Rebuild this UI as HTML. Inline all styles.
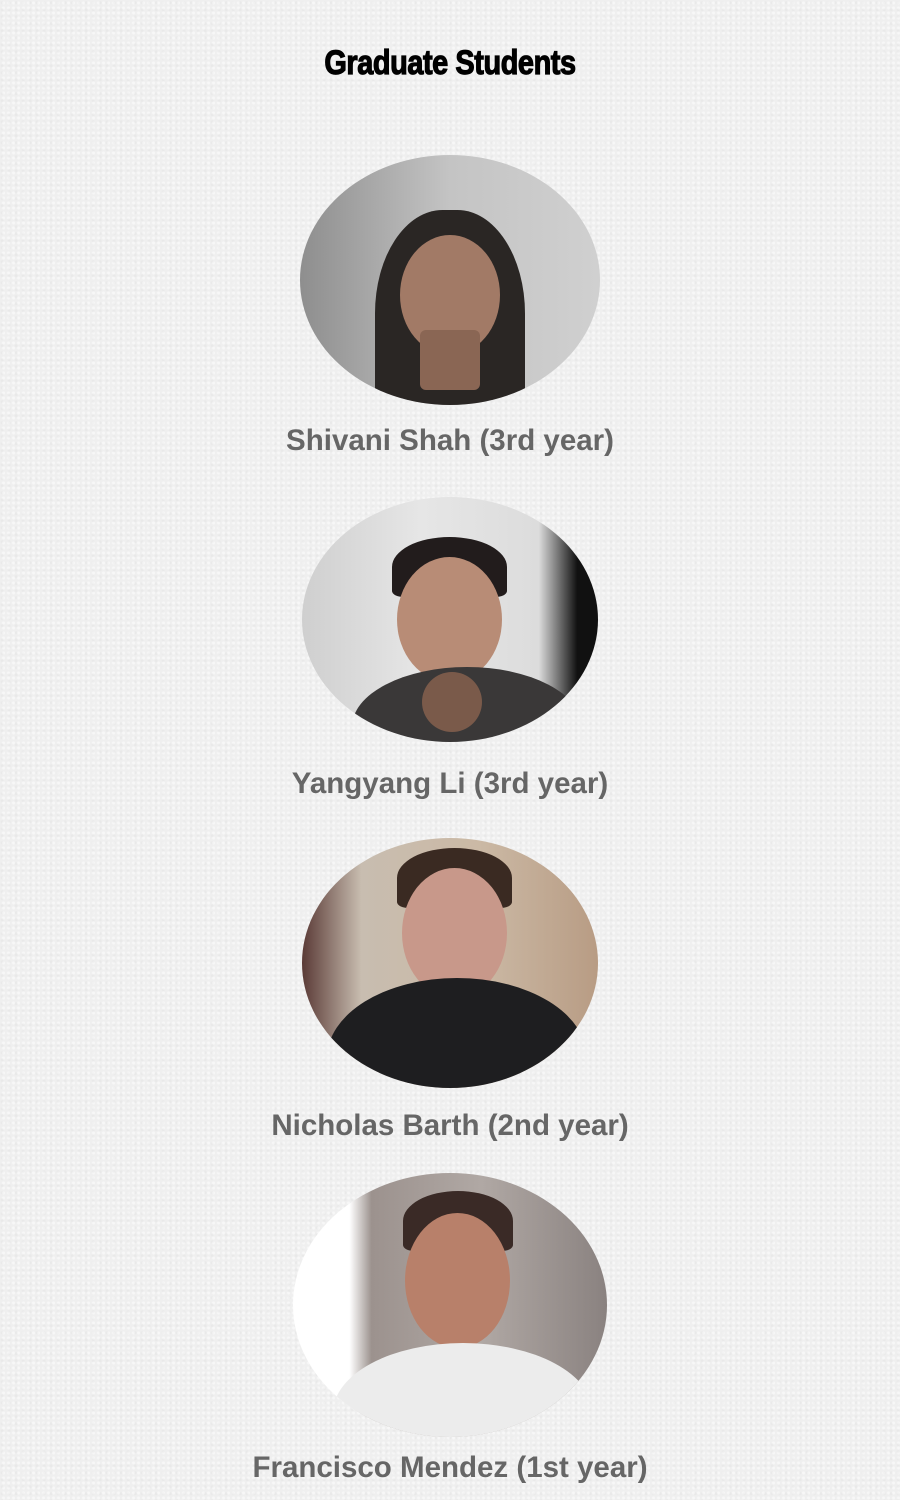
<!DOCTYPE html>
<html><head><meta charset="utf-8"><style>
html,body{margin:0;padding:0}
body{width:900px;height:1500px;position:relative;overflow:hidden;background:#efefef;
background-image:radial-gradient(circle at 30% 40%,rgba(0,0,0,.025) 1px,transparent 2px),radial-gradient(circle at 70% 60%,rgba(255,255,255,.5) 1px,transparent 2px);
background-size:7px 7px,5px 5px;font-family:"Liberation Sans",sans-serif}
h1{position:absolute;left:0;width:900px;top:43px;margin:0;text-align:center;font-size:34px;line-height:40px;font-weight:bold;color:#000;transform:scaleX(.85);-webkit-text-stroke:1.2px #000;letter-spacing:-0.5px}
.ph{position:absolute;border-radius:50%;overflow:hidden}
.nm{position:absolute;left:0;width:900px;text-align:center;font-size:29.5px;font-weight:bold;color:#666;line-height:32px}
.face{position:absolute;border-radius:50%}
</style></head><body>
<h1>Graduate Students</h1>

<div class="ph" style="left:300px;top:155px;width:300px;height:250px;background:linear-gradient(90deg,#8e8e8e,#c4c4c4 50%,#d0d0d0)">
 <div class="face" style="left:75px;top:55px;width:150px;height:230px;background:#2a2624;border-radius:45% 45% 20% 20%"></div>
 <div class="face" style="left:100px;top:80px;width:100px;height:120px;background:#a27a66"></div>
 <div class="face" style="left:120px;top:175px;width:60px;height:60px;background:#8a6654;border-radius:10%"></div>
</div>
<div class="nm" style="top:425px">Shivani Shah (3rd year)</div>

<div class="ph" style="left:302px;top:497px;width:296px;height:245px;background:linear-gradient(90deg,#cfcfcf,#e6e6e6 40%,#dcdcdc 80%,#111 93%)">
 <div class="face" style="left:90px;top:40px;width:115px;height:60px;background:#221c1c;border-radius:50% 50% 10% 10%"></div>
 <div class="face" style="left:95px;top:60px;width:105px;height:125px;background:#b88c76"></div>
 <div class="face" style="left:50px;top:170px;width:230px;height:120px;background:#3a3838"></div>
 <div class="face" style="left:120px;top:175px;width:60px;height:60px;background:#7a5a4a"></div>
</div>
<div class="nm" style="top:768px">Yangyang Li (3rd year)</div>

<div class="ph" style="left:302px;top:838px;width:296px;height:250px;background:linear-gradient(90deg,#5a3a36,#c8bdb0 20%,#cbb9a5 60%,#b89c84)">
 <div class="face" style="left:95px;top:10px;width:115px;height:60px;background:#3a2a22;border-radius:50% 50% 10% 10%"></div>
 <div class="face" style="left:100px;top:30px;width:105px;height:130px;background:#c8988a"></div>
 <div class="face" style="left:25px;top:140px;width:260px;height:160px;background:#1e1e20"></div>
</div>
<div class="nm" style="top:1110px">Nicholas Barth (2nd year)</div>

<div class="ph" style="left:293px;top:1173px;width:314px;height:264px;background:linear-gradient(90deg,#fff 18%,#9c928e 25%,#b0a8a4 60%,#8a8280)">
 <div class="face" style="left:110px;top:18px;width:110px;height:60px;background:#3a2a26;border-radius:50% 50% 10% 10%"></div>
 <div class="face" style="left:112px;top:40px;width:105px;height:135px;background:#b8806a"></div>
 <div class="face" style="left:40px;top:170px;width:260px;height:140px;background:#ececec"></div>
</div>
<div class="nm" style="top:1452px">Francisco Mendez (1st year)</div>
</body></html>
